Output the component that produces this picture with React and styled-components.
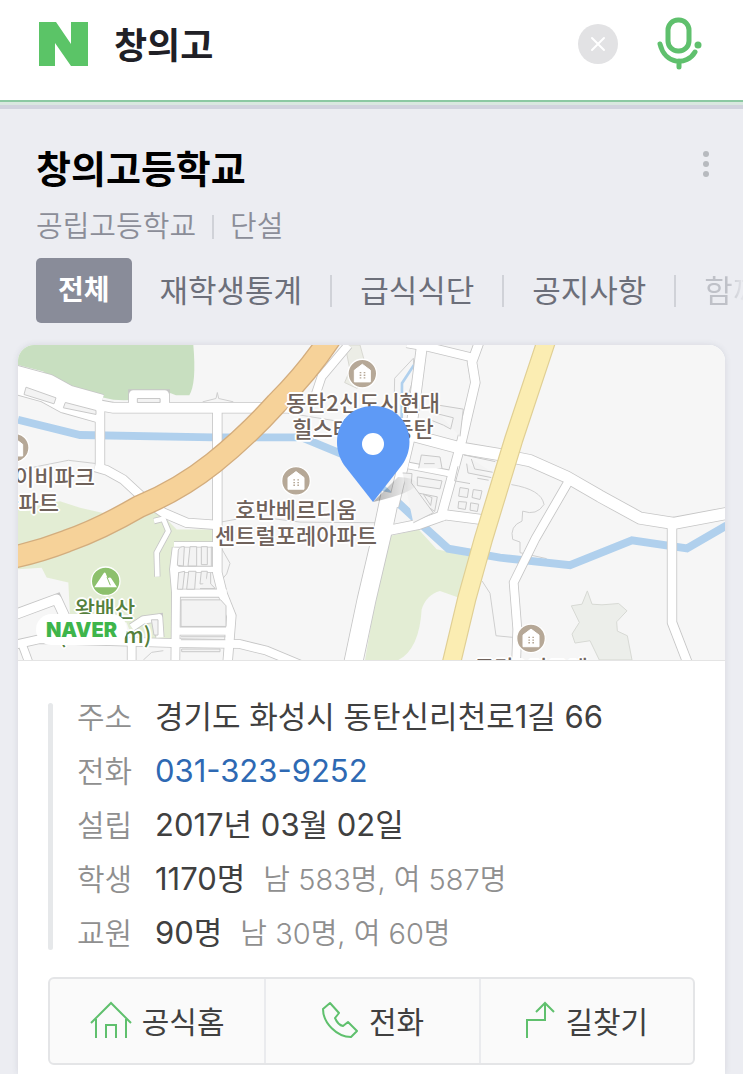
import React from "react";
import styled, { createGlobalStyle } from "styled-components";

const GlobalStyle = createGlobalStyle`
  * {
    box-sizing: border-box;
  }
  body {
    margin: 0;
    background: #ecedf2;
    color: #404040;
    font-family: Inter, "Noto Sans CJK KR", sans-serif;
    overflow-x: hidden;
  }
  a {
    text-decoration: none;
  }
  button {
    border: 0;
    padding: 0;
    background: none;
    cursor: pointer;
  }
`;

const Header = styled.header`
  height: 109px;
  border-bottom: 4px solid #d1d3de;
  background: #d9e8e0;
  padding-bottom: 3px;
`;

const SearchBar = styled.form`
  height: 102px;
  display: flex;
  align-items: center;
  padding: 0 41px 12px 39px;
  background: #fff;
  border-bottom: 2px solid #8cc9a3;
`;

const Logo = styled.a`
  display: flex;
`;

const SearchInput = styled.input`
  flex: 1;
  min-width: 0;
  height: 60px;
  margin-left: 26px;
  padding: 0 0 2px;
  border: 0;
  outline: none;
  background: none;
  color: #202026;
  font-family: inherit;
  font-size: 36px;
  font-weight: 700;
`;

const ClearButton = styled.button`
  width: 40px;
  height: 40px;
  margin-right: 38px;
  border-radius: 50%;
  background: #e2e2e4;
  display: flex;
  align-items: center;
  justify-content: center;
`;

const IconButton = styled.button`
  display: flex;
`;

const Summary = styled.section`
  padding: 32px 29px 0 36px;
`;

const TitleRow = styled.div`
  display: flex;
  justify-content: space-between;
  align-items: flex-start;
`;

const Title = styled.h1`
  margin: 0;
  color: #000;
  font-size: 38px;
  font-weight: 700;
  line-height: 56px;
`;

const MoreButton = styled.button`
  display: flex;
  margin-top: 8px;
`;

const SubTitle = styled.p`
  display: flex;
  align-items: center;
  margin: 8px 0 0;
  color: #8b8d98;
  font-size: 29px;
  font-weight: 350;
  line-height: 44px;
`;

const Divider = styled.span`
  flex: none;
  width: 2px;
  height: ${(props) => props.$height};
  margin: ${(props) => props.$margin};
  background: #d0d2d8;
`;

const Tabs = styled.nav`
  display: flex;
  align-items: center;
  height: 65px;
  margin: 9px 0 22px 36px;
  overflow: hidden;
  white-space: nowrap;
`;

const Tab = styled.a`
  flex: none;
  color: #6c6f7a;
  font-size: 31px;
  line-height: 65px;
  ${(props) =>
    props.$faded &&
    `
    background: linear-gradient(90deg, #bfc1c8 40%, #ecedf2 75%);
    background-clip: text;
    color: transparent;
  `}
`;

const ActiveTab = styled(Tab)`
  margin-right: 28px;
  padding: 0 22px;
  border-radius: 5px;
  background: #898c99;
  color: #fff;
  font-size: 28px;
  font-weight: 700;
`;

const Card = styled.main`
  margin: 0 18px;
  border-radius: 16px 16px 0 0;
  background: #fff;
  box-shadow: 0 0 6px rgba(60, 65, 90, 0.12);
  overflow: hidden;
`;

const MapBox = styled.div`
  position: relative;
  aspect-ratio: 707 / 316;
  overflow: hidden;
  background: #f6f6f6;
  border-bottom: 1px solid #e4e4e4;
`;

const MapSvg = styled.svg`
  display: block;
  width: 100%;
  height: 100%;
`;

const MapLabel = styled.span`
  position: absolute;
  left: ${(props) => (props.$x / 707) * 100}%;
  top: ${(props) => (props.$y / 316) * 100}%;
  transform: translate(${(props) => (props.$end ? "-100%" : "-50%")}, -50%);
  color: ${(props) => props.$color || "#6f625b"};
  font-family: "Noto Sans CJK KR", sans-serif;
  font-size: 22px;
  font-weight: 500;
  line-height: 26px;
  text-align: ${(props) => (props.$end ? "right" : "center")};
  white-space: pre;
  text-shadow: -2px 0 #fff, 2px 0 #fff, 0 -2px #fff, 0 2px #fff, -1px -1px #fff,
    1px 1px #fff, 1px -1px #fff, -1px 1px #fff;
`;

const MapPin = styled.svg`
  position: absolute;
  left: ${(318 / 707) * 100}%;
  top: ${(60 / 316) * 100}%;
`;

const MapBadge = styled.span`
  position: absolute;
  left: 18px;
  bottom: 15px;
  width: 91px;
  height: 31px;
  border-radius: 16px;
  background: #fff;
  color: #3eb54b;
  font-size: 20px;
  font-weight: 900;
  line-height: 32px;
  text-align: center;
`;

const Details = styled.div`
  display: flex;
  padding: 29px 30px 0;
`;

const DetailsBar = styled.span`
  flex: none;
  width: 5px;
  margin: 13px 24px 10px 0;
  border-radius: 3px;
  background: #e6e8ea;
`;

const DetailList = styled.dl`
  flex: 1;
  margin: 0;
`;

const DetailRow = styled.div`
  display: flex;
  height: 54px;
  line-height: 54px;
  font-size: 31px;
`;

const DetailName = styled.dt`
  width: 78px;
  color: #8f8f8f;
  font-size: 30px;
  font-weight: 350;
`;

const DetailValue = styled.dd`
  margin: 0;
  white-space: nowrap;
`;

const Note = styled.span`
  margin-left: 18px;
  color: #8f8f8f;
  font-size: 29px;
  font-weight: 350;
`;

const PhoneLink = styled.a`
  color: #2e69b3;
`;

const Actions = styled.div`
  display: grid;
  grid-template-columns: repeat(3, 1fr);
  height: 88px;
  margin: 17px 30px 9px;
  border: 2px solid #e4e5e7;
  border-radius: 6px;
  background: #fafafa;
`;

const Action = styled.a`
  display: flex;
  align-items: center;
  justify-content: center;
  gap: 10px;
  padding-bottom: 3px;
  color: #404040;
  font-size: 30px;
  & + & {
    border-left: 2px solid #eaebee;
  }
`;

const roads = [
  { d: "M30 115 L140 145 L200 178 L300 206", w: 84 },
  { d: "M290 195 L340 204 L880 204", w: 30 },
  { d: "M400 200 L400 164 L494 164 L494 200", w: 26 },
  { d: "M300 200 L300 385", w: 26 },
  { d: "M285 382 L320 392 L370 420 L440 485 L490 520 L560 550 L645 556", w: 26 },
  { d: "M652 204 L652 700 L668 765 L694 830 L682 980", w: 26 },
  { d: "M1045 15 L965 110 L945 170", w: 24 },
  { d: "M1058 980 L1100 780 L1148 575 L1172 460", w: 54 },
  { d: "M1180 500 L1232 280 L1268 0", w: 30 },
  { d: "M1220 282 L1380 325 L1500 345 L1590 363 L1700 412 L1800 470 L1920 536 L2020 552 L2190 520", w: 34 },
  { d: "M1440 0 L1416 66 L1426 128 L1386 300 L1351 430 L1321 540", w: 26 },
  { d: "M1220 10 L1290 22 L1430 56", w: 24 },
  { d: "M1170 572 L1256 555 L1336 526 L1460 542", w: 28 },
  { d: "M1226 378 L1350 402", w: 18 },
  { d: "M1706 425 L1606 598 L1541 730 L1552 870 L1548 980", w: 24 },
  { d: "M2016 555 L2016 850 L2066 980", w: 26 },
  { d: "M40 828 L170 780 L200 845", w: 28 },
  { d: "M40 918 L120 900 L515 912 L720 915 L800 935 L920 985", w: 24 },
  { d: "M66 915 L90 980", w: 22 },
  { d: "M395 915 L395 980", w: 24 },
  { d: "M530 625 L522 690 L528 760 L526 980", w: 24 },
  { d: "M522 615 L640 615", w: 14 },
  { d: "M522 690 L640 690", w: 16 },
  { d: "M530 762 L680 762", w: 22 },
  { d: "M530 876 L690 876", w: 22 },
  { d: "M462 545 L490 538 L505 575 L470 640 L472 712", w: 14 },
  { d: "M395 865 L430 842 L476 836 L480 895", w: 22 },
];

const blocks = [
  "M78 142 L168 174 L162 192 L72 164 Z",
  "M196 188 L288 212 L288 224 L190 204 Z",
  "M412 176 H480 V188 H412 Z",
  "M535 632 Q540 620 553 622 L550 680 L532 678 Z",
  "M570 622 H590 V680 H564 Z",
  "M604 622 H622 V676 H604 Z",
  "M536 700 L554 696 L548 750 L532 750 Z",
  "M566 696 H588 L584 750 H560 Z",
  "M604 696 H622 L618 734 H600 Z",
  "M634 622 V680 M632 700 V734 L646 748 H600",
  "M543 782 H662 L678 800 V862 H543 Z",
  "M543 893 H676 M543 902 H676",
  "M545 930 H660 V938 H545 Z",
  "M454 842 H474 V888 H462 Z",
  "M1290 192 L1390 208 L1380 290 M1290 240 L1330 256 L1352 268 L1360 234 L1312 222",
  "M1256 386 L1264 346 L1320 352 L1326 386 M1272 372 H1304",
  "M1252 412 L1326 424 L1320 448 L1252 438 Z",
  "M1252 460 L1312 472 L1304 516 L1240 470",
  "M1270 464 L1296 474 L1292 498 Z",
  "M1392 346 L1486 366 M1400 372 L1404 400 L1474 414 M1414 358 L1424 388 L1478 398",
  "M1364 424 L1374 380 M1364 424 L1410 432 M1432 416 L1466 422",
  "M1380 444 L1406 448 L1402 474 L1376 470 Z",
  "M1420 450 L1446 454 L1440 480 L1416 474 Z",
  "M1376 486 L1400 488 L1396 510 L1374 506 Z",
  "M1412 490 L1436 494 L1432 516 L1410 512 Z",
  "M1208 400 L1236 402 L1234 430 L1300 520 L1240 550",
];

const buildings = [
  [1087, 101],
  [888, 424],
  [1593, 898],
  [44, 324],
];

const CityMap = () => (
  <MapSvg viewBox="54 15 2121 948" preserveAspectRatio="none" aria-hidden="true">
    <path
      d="M54 15 H580 Q590 130 568 166 L528 166 Q490 148 470 172 Q400 184 340 180 L250 160 L200 135 L150 115 L130 95 L54 75 Z"
      fill="#c8dfc0"
    />
    <path
      d="M54 510 L180 485 L240 505 L330 525 L480 520 L530 570 H640 V608 L530 612 L515 700 L518 905 L400 905 L380 850 L210 830 L205 730 L140 715 L125 685 L54 690 Z"
      fill="#e3edd4"
    />
    <path
      d="M1170 590 L1256 570 L1310 630 L1430 655 L1375 775 L1320 755 Q1280 765 1265 810 Q1258 930 1195 963 H1095 L1116 840 Z"
      fill="#e3edd4"
    />
    <path
      d="M1762 755 L1776 795 L1806 797 L1856 793 L1881 815 L1850 848 L1852 876 L1882 890 L1896 963 H1798 L1770 905 L1725 912 L1716 885 L1738 850 L1714 800 L1746 795 Z"
      fill="#eceeea"
      stroke="#d7d9d4"
      strokeWidth="3"
    />
    <path d="M1035 15 L1080 15 L1110 125 L1070 145 L1034 128 L1050 90 Z" fill="#ecede6" stroke="#d8d8d2" strokeWidth="3" />
    <g fill="none" stroke="#cfcfcf" strokeWidth="3">
      <path d="M54 392 L205 362 L290 372" />
      <path d="M640 552 L760 530 L900 548 L1140 550" />
      <path d="M665 628 L690 672 L680 704 L660 728" />
      <path d="M608 186 L648 176 L652 158 L656 176 L700 186" />
      <path d="M865 220 L1060 252" />
      <path d="M1534 435 Q1625 450 1632 495 Q1610 530 1568 515 L1566 545 Q1528 560 1538 600 L1560 608 L1560 640 L1640 658" />
      <path d="M1446 725 L1470 762 L1488 890 L1540 895" />
      <path d="M1240 55 L1184 115 L1182 200 M1240 55 L1242 110 L1212 205" />
      <path d="M430 963 L455 940 L490 935" />
    </g>
    <g fill="none" stroke="#b0d0ed">
      <path d="M54 240 L240 286 L640 293 H905 L1030 345 L1200 495 L1270 560 L1345 628 L1500 655 L1710 678 L1896 603 L2061 627 L2180 558" strokeWidth="24" />
      <path d="M1242 75 L1206 130 L1205 240" strokeWidth="8" />
    </g>
    <g fill="none" stroke="#c6c6c6">
      {roads.map((road) => (
        <path key={road.d} d={road.d} strokeWidth={road.w + 5} />
      ))}
    </g>
    <g fill="none" stroke="#fff" strokeLinejoin="round">
      {roads.map((road) => (
        <path key={road.d} d={road.d} strokeWidth={road.w} />
      ))}
    </g>
    <g fill="#f3f3f3" stroke="#c9c9c9" strokeWidth="3">
      {blocks.map((d) => (
        <path key={d} d={d} />
      ))}
    </g>
    <g fill="none">
      <path
        d="M1650 -30 L1541 300 L1450 600 L1400 780 L1350 990"
        stroke="#e0cf94"
        strokeWidth="58"
      />
      <path
        d="M1650 -30 L1541 300 L1450 600 L1400 780 L1350 990"
        stroke="#fbedb2"
        strokeWidth="51"
      />
      <path
        d="M1000 -20 Q930 90 830 190 Q740 290 640 370 Q540 450 420 500 Q300 570 200 605 Q120 636 30 656"
        stroke="#d3ad7e"
        strokeWidth="70"
      />
      <path
        d="M1000 -20 Q930 90 830 190 Q740 290 640 370 Q540 450 420 500 Q300 570 200 605 Q120 636 30 656"
        stroke="#f6d299"
        strokeWidth="62"
      />
    </g>
    {buildings.map(([x, y]) => (
      <g key={x} transform={`translate(${x} ${y})`}>
        <circle r="43" fill="#b6a897" stroke="#fff" strokeWidth="4" />
        <path d="M-24 25 V-10 L0 -28 L24 -10 V25 Z" fill="#fff" strokeLinejoin="round" stroke="#fff" strokeWidth="3" />
        <path d="M-8 -3 h5 M4 -3 h5 M-8 5 h5 M4 5 h5 M-8 13 h5 M4 13 h5" stroke="#b6a897" strokeWidth="4" />
      </g>
    ))}
    <g transform="translate(317 726)">
      <circle r="43" fill="#8cc06c" stroke="#fff" strokeWidth="4" />
      <path d="M-34 18 L-6 -24 Q-3 -28 0 -24 L6 -8 Q13 -14 17 -8 L34 18 Z" fill="#fff" />
      <path d="M4 -12 L14 12" stroke="#8cc06c" strokeWidth="3" />
    </g>
  </MapSvg>
);

const details = [
  { name: "주소", value: "경기도 화성시 동탄신리천로1길 66" },
  { name: "전화", value: "031-323-9252", phone: true },
  { name: "설립", value: "2017년 03월 02일" },
  { name: "학생", value: "1170명", note: "남 583명, 여 587명" },
  { name: "교원", value: "90명", note: "남 30명, 여 60명" },
];

const App = () => {
  return (
    <>
      <GlobalStyle />
      <Header>
        <SearchBar onSubmit={(e) => e.preventDefault()}>
          <Logo href="#" aria-label="NAVER">
            <svg width="49" height="44" viewBox="0 0 49 44">
              <path d="M0 0 H17 L32 22 V0 H49 V44 H32 L16 21 V44 H0 Z" fill="#5bc467" />
            </svg>
          </Logo>
          <SearchInput aria-label="검색어" defaultValue="창의고" />
          <ClearButton type="button" aria-label="지우기">
            <svg width="16" height="16" viewBox="0 0 16 16">
              <path d="M2 2 L14 14 M14 2 L2 14" stroke="#fff" strokeWidth="2" strokeLinecap="round" />
            </svg>
          </ClearButton>
          <IconButton type="button" aria-label="음성 검색">
            <svg width="46" height="54" viewBox="0 0 46 54" fill="none" stroke="#5fc06d" strokeWidth="5" strokeLinecap="round">
              <rect x="12" y="3" width="21" height="31" rx="10" />
              <path d="M4 27 C9 48 31 49 39 35 M23 44 V50" />
              <circle cx="42" cy="28" r="3.5" fill="#5fc06d" stroke="none" />
            </svg>
          </IconButton>
        </SearchBar>
      </Header>
      <Summary>
        <TitleRow>
          <Title>창의고등학교</Title>
          <MoreButton type="button" aria-label="더보기">
            <svg width="16" height="30" viewBox="0 0 16 30" fill="#b7babf">
              <circle cx="8" cy="5" r="3" />
              <circle cx="8" cy="15" r="3" />
              <circle cx="8" cy="25" r="3" />
            </svg>
          </MoreButton>
        </TitleRow>
        <SubTitle>
          공립고등학교
          <Divider $height="24px" $margin="0 16px" />
          단설
        </SubTitle>
      </Summary>
      <Tabs>
        <ActiveTab href="#">전체</ActiveTab>
        <Tab href="#">재학생통계</Tab>
        <Divider $height="32px" $margin="0 28px" />
        <Tab href="#">급식식단</Tab>
        <Divider $height="32px" $margin="0 28px" />
        <Tab href="#">공지사항</Tab>
        <Divider $height="32px" $margin="0 28px" />
        <Tab href="#" $faded>
          함께
        </Tab>
      </Tabs>
      <Card>
        <MapBox>
          <CityMap />
          <MapLabel $x={345} $y={69}>{"동탄2신도시현대\n힐스테이트동탄"}</MapLabel>
          <MapLabel $x={278} $y={177}>{"호반베르디움\n센트럴포레아파트"}</MapLabel>
          <MapLabel $x={77} $y={130} $end>
            이비파크
          </MapLabel>
          <MapLabel $x={41} $y={156} $end>
            아파트
          </MapLabel>
          <MapLabel $x={87} $y={276} $color="#55803c">{"왕배산\n(245.7m)"}</MapLabel>
          <MapLabel $x={513} $y={322}>동탄2디그레</MapLabel>
          <MapPin width="88" height="100" viewBox="0 0 88 100">
            <defs>
              <linearGradient id="pinShadow" x1="0" x2="1">
                <stop offset="0" stopColor="#000" stopOpacity="0.3" />
                <stop offset="1" stopColor="#000" stopOpacity="0" />
              </linearGradient>
            </defs>
            <path d="M37 97 L62 72 Q76 72 82 78 Q78 88 37 97 Z" fill="url(#pinShadow)" />
            <path d="M37 97 L8 60 C-8 36 4 1 37.500 1 C70 1 83 36 66 60 Z" fill="#5e9af6" />
            <circle cx="37" cy="39" r="11" fill="#fff" />
          </MapPin>
          <MapBadge>NAVER</MapBadge>
        </MapBox>
        <Details>
          <DetailsBar />
          <DetailList>
            {details.map((item) => (
              <DetailRow key={item.name}>
                <DetailName>{item.name}</DetailName>
                <DetailValue>
                  {item.phone ? (
                    <PhoneLink href={`tel:${item.value}`}>{item.value}</PhoneLink>
                  ) : (
                    item.value
                  )}
                  {item.note && <Note>{item.note}</Note>}
                </DetailValue>
              </DetailRow>
            ))}
          </DetailList>
        </Details>
        <Actions>
          <Action href="#">
            <svg width="42" height="38" viewBox="0 0 42 38" fill="none" stroke="#5fc06d" strokeWidth="2">
              <path d="M1 22 L21 2 L41 22 M6 18 V37 M36 18 V37 M16 37 V24 H26 V37" />
            </svg>
            공식홈
          </Action>
          <Action href="tel:031-323-9252">
            <svg width="38" height="38" viewBox="0 0 38 38" fill="none" stroke="#5fc06d" strokeWidth="2" strokeLinejoin="round">
              <path d="M9 2 L18 12 L14 17 Q17 24 22 25 L27 21 L36 30 L30 36 C16 36 2 22 2 8 Z" />
            </svg>
            전화
          </Action>
          <Action href="#">
            <svg width="30" height="38" viewBox="0 0 30 38" fill="none" stroke="#5fc06d" strokeWidth="2">
              <path d="M2 37 V19 H20 V3 M11 11 L20 2 L29 11" />
            </svg>
            길찾기
          </Action>
        </Actions>
      </Card>
    </>
  );
};

export default App;
